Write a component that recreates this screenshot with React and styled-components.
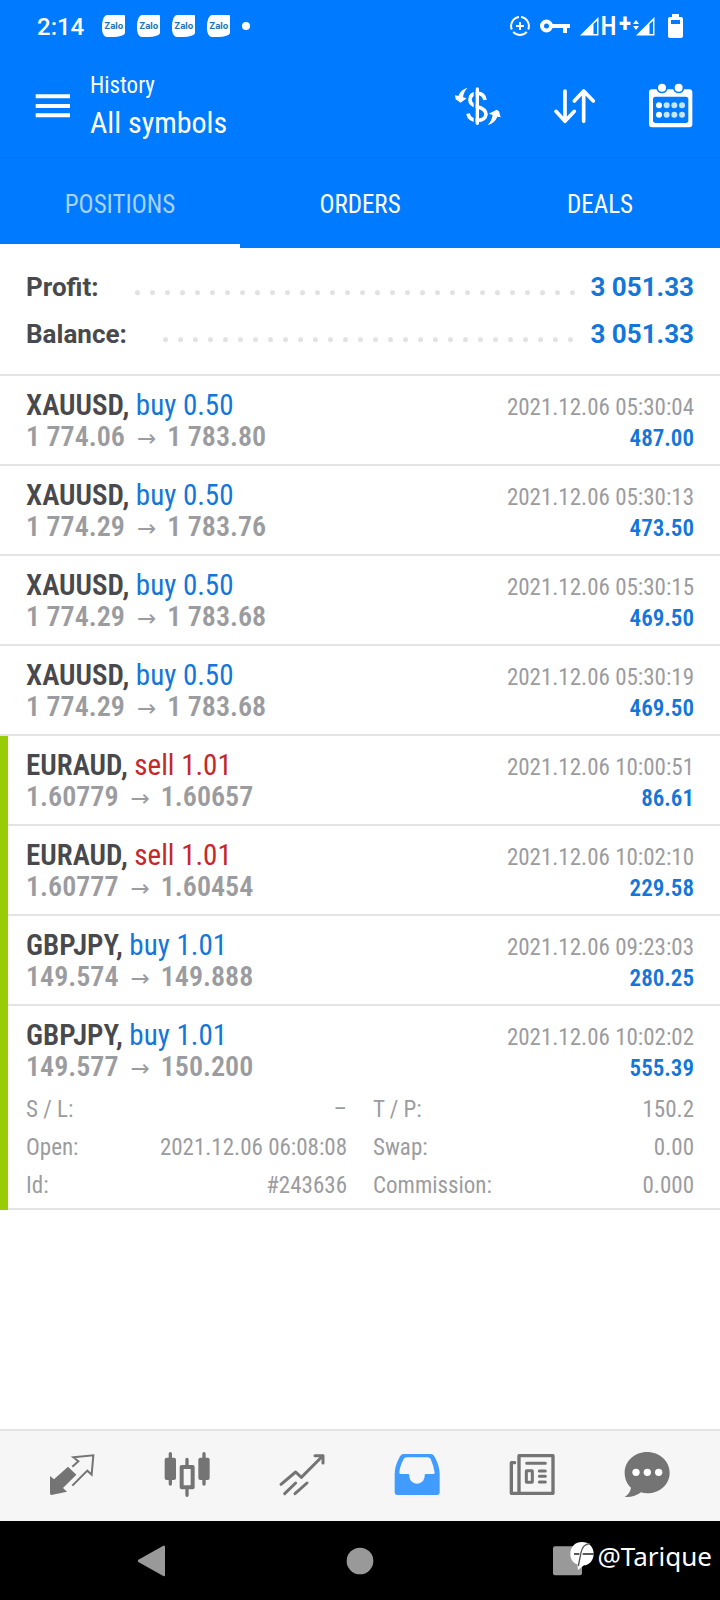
import React from "react";
import styled, { createGlobalStyle } from "styled-components";

const color = {
  brand: "#007aff",
  brandLine: "#0670e8",
  ink: "#48494d",
  muted: "#9b9ca0",
  buy: "#1276da",
  sell: "#c4282a",
  line: "#e4e4e6",
  mark: "#99cc05",
  icon: "#747474",
  active: "#429bff",
  bar: "#f6f6f6",
};

const condensed = `"Roboto Condensed", Roboto, sans-serif`;

const GlobalStyle = createGlobalStyle`
  *, *::before, *::after { box-sizing: border-box; }
  body { margin: 0; background: #fff; font-family: ${condensed}; }
  button { margin: 0; padding: 0; border: 0; background: none; color: inherit; font: inherit; }
  h1, p, ul, dl, dd { margin: 0; padding: 0; }
  ul { list-style: none; }
  svg { display: block; }
`;

const Screen = styled.div`
  min-height: 100vh;
  display: flex;
  flex-direction: column;
  background: #fff;
`;

const Header = styled.header`
  background: ${color.brand};
  color: #fff;
`;

const StatusBar = styled.div`
  height: 52px;
  padding: 0 37px;
  display: flex;
  align-items: center;
  justify-content: space-between;
`;

const StatusGroup = styled.div`
  display: flex;
  align-items: center;
  gap: ${(p) => p.$gap}px;
`;

const Clock = styled.time`
  margin-right: 6px;
  padding-top: 2px;
  font: 500 24px/28px Roboto, sans-serif;
`;

const ZaloBadge = styled.span`
  width: 23px;
  height: 22px;
  border-radius: 5px 1px 12px 5px / 11px 1px 4px 8px;
  background: #fff;
  color: #2274b8;
  font: 700 9px/22px Inter, sans-serif;
  text-align: center;
`;

const Dot = styled.span`
  width: 8px;
  height: 8px;
  border-radius: 50%;
  background: #fff;
`;

const Network = styled.span`
  display: flex;
  align-items: center;
  gap: 2px;
  padding-right: 3px;
  font: 500 26px/28px ${condensed};
`;

const Plus = styled.sup`
  font: 700 26px/22px ${condensed};
  align-self: flex-start;
`;

const Toolbar = styled.div`
  min-height: 106px;
  padding: 2px 26px 0 29px;
  display: flex;
  align-items: center;
  border-bottom: 1px solid ${color.brandLine};
`;

const IconButton = styled.button`
  width: 48px;
  height: 48px;
  flex: none;
`;

const Titles = styled.div`
  flex: 1;
  padding: 4px 0 0 13px;
`;

const Overline = styled.p`
  font-size: 23px;
  line-height: 30px;
`;

const Title = styled.h1`
  font-size: 30px;
  font-weight: 400;
  line-height: 44px;
`;

const Actions = styled.div`
  display: flex;
  gap: 48px;
`;

const Tabs = styled.div`
  display: grid;
  grid-template-columns: repeat(3, 1fr);
`;

const Tab = styled.button`
  && {
    height: 90px;
    padding-top: 6px;
    border-bottom: 4px solid ${(p) => (p.$selected ? "#fff" : "transparent")};
    color: ${(p) => (p.$selected ? "#a8d2ff" : "#fff")};
    font-size: 25px;
  }
`;

const Summary = styled.dl`
  && { padding: 16px 26px; }
  border-bottom: 2px solid ${color.line};
`;

const SummaryRow = styled.div`
  display: flex;
  font: 700 26px/47px Roboto, sans-serif;
  color: ${color.ink};
`;

const SummaryValue = styled.dd`
  color: ${color.buy};
`;

const Leader = styled.span`
  flex: 1;
  margin: 0 10px 0 31px;
  background: radial-gradient(circle at 50% 61%, #e2e2e4 2px, transparent 3px) 0 0 / 15px 100% repeat-x;
`;

const Main = styled.main`
  flex: 1;
`;

const Deals = styled.ul`
  && { padding-left: 0; }
  border-left: ${(p) => (p.$marked ? `8px solid ${color.mark}` : "0")};
`;

const Deal = styled.li`
  padding: 13px 26px ${(p) => (p.$open ? 3 : 11)}px ${(p) => (p.$marked ? 18 : 26)}px;
  border-bottom: 2px solid ${color.line};
`;

const Line = styled.div`
  height: 32px;
  display: flex;
  align-items: baseline;
  justify-content: space-between;
  font-size: 29px;
  line-height: 32px;
  white-space: nowrap;
`;

const Symbol = styled.strong`
  color: ${color.ink};
  font-weight: 600;
`;

const Side = styled.span`
  color: ${(p) => (p.$side === "sell" ? color.sell : color.buy)};
`;

const Time = styled.time`
  color: ${color.muted};
  font-size: 23px;
  line-height: 28px;
`;

const Prices = styled.span`
  color: ${color.muted};
  font-size: 28px;
  font-weight: 600;
`;

const Arrow = styled.span`
  margin: 0 11px 0 12px;
  font: 400 23px/20px "DejaVu Sans", sans-serif;
`;

const Profit = styled.strong`
  color: ${color.buy};
  font-size: 23px;
  font-weight: 600;
  line-height: 28px;
`;

const Details = styled.dl`
  && { margin-top: 8px; }
  display: grid;
  grid-template-columns: 1fr 1fr;
  column-gap: 26px;
  color: ${color.muted};
  font-size: 23px;
  line-height: 38px;
`;

const Detail = styled.div`
  display: flex;
  justify-content: space-between;
`;

const BottomNav = styled.nav`
  height: 92px;
  padding: 0 16px 0 14px;
  display: grid;
  grid-template-columns: repeat(6, 1fr);
  align-items: center;
  justify-items: center;
  border-top: 2px solid ${color.line};
  background: ${color.bar};
  color: ${color.icon};
`;

const NavButton = styled(IconButton)`
  && { color: ${(p) => (p.$active ? color.active : "inherit")}; }
`;

const SystemNav = styled.div`
  position: relative;
  height: 79px;
  padding: 0 48px;
  display: grid;
  grid-template-columns: repeat(3, 1fr);
  align-items: center;
  justify-items: center;
  background: #000;
  color: #999;
`;

const Watermark = styled.div`
  position: absolute;
  top: 17px;
  right: 8px;
  display: flex;
  align-items: center;
  gap: 3px;
  color: #fff;
  font: 400 26px/36px "Noto Sans", sans-serif;
`;

const Icon = ({ children, size = 48, ...rest }) => (
  <svg width={size} height={size} viewBox="0 0 144 144" fill="none" stroke="currentColor" strokeLinecap="round" strokeLinejoin="round" aria-hidden="true" {...rest}>
    {children}
  </svg>
);

const MenuIcon = () => (
  <Icon strokeWidth="12" strokeLinecap="butt">
    <path d="M20 43H123M20 72H123M20 100H123" />
  </Icon>
);

const CurrencyIcon = () => (
  <Icon strokeWidth="11" strokeLinecap="butt">
    <path d="M93 54Q90 34 70 34Q48 34 48 54Q48 68 70 74Q96 81 96 97Q94 115 70 115Q46 115 42 95" />
    <path d="M62 20V126" stroke={color.brand} strokeWidth="6" />
    <path d="M70 21V124" strokeLinecap="round" strokeWidth="10" />
    <path d="M41 17Q20 22 13 42L3 40L5 52L20 62L38 49L27 46Q29 28 41 17Z" fill="currentColor" stroke="none" />
    <path d="M101 129Q122 124 130 104L140 106L135 88L128 83L104 95L116 99Q113 117 101 129Z" fill="currentColor" stroke="none" />
  </Icon>
);

const SortIcon = () => (
  <Icon strokeWidth="11">
    <path d="M45 27V118M18 88L45 118L73 88M101 118V27M73 57L101 27L130 57" />
  </Icon>
);

const CalendarIcon = () => (
  <Icon stroke="none" fill="currentColor">
    <rect x="9" y="22" width="130" height="114" rx="9" />
    <rect x="21" y="44" width="106" height="79" rx="8" fill={color.brand} />
    {[48, 98].map((x) => (
      <g key={x}>
        <circle cx={x} cy="17" r="17" fill={color.brand} />
        <circle cx={x} cy="17" r="12" />
      </g>
    ))}
    {[39, 62, 85, 108].map((x) => (
      <g key={x} fill={x === 39 ? "#fff" : "#c4e4ff"}>
        <circle cx={x} cy="70" r="9" />
        <circle cx={x} cy="98" r="9" />
      </g>
    ))}
  </Icon>
);

const QuotesIcon = () => (
  <Icon strokeWidth="6" strokeLinecap="butt" strokeLinejoin="miter">
    <path d="M6 72L18 82L60 44L85 68L45 108L57 119L10 129Q6 129 6 124Z" fill="currentColor" stroke="none" />
    <path d="M73 44L91 28L76 16L136 10L131 68L118 56L73 101" />
  </Icon>
);

const ChartIcon = () => (
  <Icon strokeWidth="10">
    <path d="M22 5V96M123 5V96M72 22V39M72 112V130" />
    <rect x="5" y="17" width="34" height="67" rx="6" fill="currentColor" stroke="none" />
    <rect x="106" y="17" width="34" height="67" rx="6" fill="currentColor" stroke="none" />
    <rect x="56" y="45" width="33" height="61" strokeWidth="12" />
  </Icon>
);

const TradeIcon = () => (
  <Icon strokeWidth="9">
    <path d="M9 97L53 60L70 76L134 12" />
    <path d="M111 11H135V33" />
    <path d="M20 125L53 93M51 125L87 93" />
  </Icon>
);

const HistoryIcon = () => (
  <Icon stroke="none" fill="currentColor">
    <path fillRule="evenodd" d="M32 6H113Q120 6 124 13Q140 42 140 66V121Q140 129 132 129H13Q5 129 5 121V66Q5 42 21 13Q25 6 32 6ZM41 16Q35 16 32 21Q20 44 19 62Q19 66 23 66H45Q49 66 49 70C49 86 59 95 72 95C85 95 95 86 95 70Q95 66 99 66H121Q125 66 125 62Q123 44 113 21Q110 16 104 16Z" />
  </Icon>
);

const NewsIcon = () => (
  <Icon strokeWidth="10">
    <rect x="33" y="11" width="102" height="113" />
    <path d="M20 32H10V124H33" />
    <path d="M56 34H112M94 57H112M94 73H112M94 90H112" strokeWidth="9" />
    <rect x="55" y="56" width="18" height="35" rx="1" strokeWidth="9" />
  </Icon>
);

const ChatIcon = () => (
  <Icon stroke="none" fill="currentColor">
    <path d="M72 0C110 0 140 27 140 62C140 97 110 124 72 124Q62 124 54 121Q34 137 5 135Q21 125 24 107C12 96 5 80 5 62C5 27 35 0 72 0Z" />
    <g fill="#fff">
      <circle cx="39" cy="61" r="11" />
      <circle cx="73" cy="61" r="11" />
      <circle cx="107" cy="61" r="11" />
    </g>
  </Icon>
);

const Signal = () => (
  <svg width="19" height="19" viewBox="0 0 19 19" aria-hidden="true">
    <path d="M0 18.500L18.500 0V18.500Z" fill="#fff" />
    <path d="M13.500 7L17 4V17H13.500Z" fill={color.brand} />
  </svg>
);

const DataSignal = () => (
  <svg width="22" height="19" viewBox="0 0 22 19" aria-hidden="true">
    <path d="M3 18.500L21.500 0V18.500Z" fill="#fff" />
    <path d="M16.500 7L20 4V17H16.500Z" fill={color.brand} />
    <path d="M0 7L3 3L6 7ZM0 9L3 13L6 9Z" fill="#fff" />
  </svg>
);

const StatusIcons = () => (
  <StatusGroup $gap={10}>
    <svg width="20" height="20" viewBox="0 0 20 20" fill="none" stroke="#fff" strokeWidth="2" aria-hidden="true">
      <path d="M11 1.100A9 9 0 0 1 18.200 13.500M16.800 15.800A9 9 0 0 1 3.200 15.800M1.800 13.500A9 9 0 0 1 9 1.100M10 6V14M6 10H14" />
    </svg>
    <svg width="30" height="15" viewBox="0 0 30 15" fill="none" stroke="#fff" strokeWidth="4" aria-hidden="true">
      <circle cx="6.500" cy="7" r="4.500" />
      <path d="M11 7H30M25 7V14" />
    </svg>
    <Network>
      <Signal />
      <span>H</span>
      <Plus>+</Plus>
      <DataSignal />
    </Network>
    <svg width="15" height="24" viewBox="0 0 15 24" aria-hidden="true">
      <path d="M4 0H11V3H13Q15 3 15 5V22Q15 24 13 24H2Q0 24 0 22V5Q0 3 2 3H4Z" fill="#fff" />
      <path d="M3 6H12V10H3Z" fill={color.brand} />
    </svg>
  </StatusGroup>
);

const summary = [
  ["Profit:", "3 051.33"],
  ["Balance:", "3 051.33"],
];

const goldDeals = [
  { symbol: "XAUUSD", side: "buy", lots: "0.50", from: "1 774.06", to: "1 783.80", time: "2021.12.06 05:30:04", profit: "487.00" },
  { symbol: "XAUUSD", side: "buy", lots: "0.50", from: "1 774.29", to: "1 783.76", time: "2021.12.06 05:30:13", profit: "473.50" },
  { symbol: "XAUUSD", side: "buy", lots: "0.50", from: "1 774.29", to: "1 783.68", time: "2021.12.06 05:30:15", profit: "469.50" },
  { symbol: "XAUUSD", side: "buy", lots: "0.50", from: "1 774.29", to: "1 783.68", time: "2021.12.06 05:30:19", profit: "469.50" },
];

const markedDeals = [
  { symbol: "EURAUD", side: "sell", lots: "1.01", from: "1.60779", to: "1.60657", time: "2021.12.06 10:00:51", profit: "86.61" },
  { symbol: "EURAUD", side: "sell", lots: "1.01", from: "1.60777", to: "1.60454", time: "2021.12.06 10:02:10", profit: "229.58" },
  { symbol: "GBPJPY", side: "buy", lots: "1.01", from: "149.574", to: "149.888", time: "2021.12.06 09:23:03", profit: "280.25" },
  {
    symbol: "GBPJPY", side: "buy", lots: "1.01", from: "149.577", to: "150.200", time: "2021.12.06 10:02:02", profit: "555.39",
    details: [
      ["S / L:", "–"],
      ["T / P:", "150.2"],
      ["Open:", "2021.12.06 06:08:08"],
      ["Swap:", "0.00"],
      ["Id:", "#243636"],
      ["Commission:", "0.000"],
    ],
  },
];

const navItems = [
  ["Quotes", QuotesIcon],
  ["Charts", ChartIcon],
  ["Trade", TradeIcon],
  ["History", HistoryIcon],
  ["News", NewsIcon],
  ["Messages", ChatIcon],
];

const DealList = ({ deals, marked }) => (
  <Deals $marked={marked}>
    {deals.map((d, i) => (
      <Deal key={i} $marked={marked} $open={Boolean(d.details)}>
        <Line>
          <span>
            <Symbol>{d.symbol},</Symbol> <Side $side={d.side}>{d.side} {d.lots}</Side>
          </span>
          <Time>{d.time}</Time>
        </Line>
        <Line>
          <Prices>{d.from}<Arrow>→</Arrow>{d.to}</Prices>
          <Profit>{d.profit}</Profit>
        </Line>
        {d.details && (
          <Details>
            {d.details.map(([label, value]) => (
              <Detail key={label}>
                <dt>{label}</dt>
                <dd>{value}</dd>
              </Detail>
            ))}
          </Details>
        )}
      </Deal>
    ))}
  </Deals>
);

export default function App() {
  return (
    <Screen>
      <GlobalStyle />
      <Header>
        <StatusBar>
          <StatusGroup $gap={12}>
            <Clock>2:14</Clock>
            {[0, 1, 2, 3].map((n) => <ZaloBadge key={n}>Zalo</ZaloBadge>)}
            <Dot />
          </StatusGroup>
          <StatusIcons />
        </StatusBar>
        <Toolbar>
          <IconButton aria-label="Menu"><MenuIcon /></IconButton>
          <Titles>
            <Overline>History</Overline>
            <Title>All symbols</Title>
          </Titles>
          <Actions>
            <IconButton aria-label="Currency"><CurrencyIcon /></IconButton>
            <IconButton aria-label="Sort"><SortIcon /></IconButton>
            <IconButton aria-label="Period"><CalendarIcon /></IconButton>
          </Actions>
        </Toolbar>
        <Tabs role="tablist">
          <Tab role="tab" aria-selected="true" $selected>POSITIONS</Tab>
          <Tab role="tab" aria-selected="false">ORDERS</Tab>
          <Tab role="tab" aria-selected="false">DEALS</Tab>
        </Tabs>
      </Header>
      <Main>
        <Summary>
          {summary.map(([label, value]) => (
            <SummaryRow key={label}>
              <dt>{label}</dt>
              <Leader />
              <SummaryValue>{value}</SummaryValue>
            </SummaryRow>
          ))}
        </Summary>
        <DealList deals={goldDeals} />
        <DealList deals={markedDeals} marked />
      </Main>
      <BottomNav aria-label="Sections">
        {navItems.map(([label, Glyph]) => (
          <NavButton key={label} aria-label={label} $active={label === "History"}><Glyph /></NavButton>
        ))}
      </BottomNav>
      <SystemNav>
        <IconButton aria-label="Back">
          <Icon stroke="none" fill="currentColor"><path d="M31 68L106 26Q111 24 111 30V114Q111 120 106 117L31 75Q27 72 31 68Z" /></Icon>
        </IconButton>
        <IconButton aria-label="Home">
          <Icon stroke="none" fill="currentColor"><circle cx="72" cy="72" r="40" /></Icon>
        </IconButton>
        <IconButton aria-label="Recent apps">
          <Icon stroke="none" fill="currentColor"><rect x="27" y="28" width="87" height="87" rx="6" /></Icon>
        </IconButton>
        <Watermark>
          <svg width="24" height="28" viewBox="0 0 72 84" aria-hidden="true">
            <path d="M36 0C56 0 71 14 71 35C71 56 56 70 42 70L24 84L22 67C8 62 1 50 1 35C1 14 16 0 36 0Z" fill="#fff" />
            <path d="M60 5Q38 6 33 32L25 72" fill="none" stroke="#555" strokeWidth="4" />
            <path d="M12 36H28M38 36H71" fill="none" stroke="#222" strokeWidth="4" />
          </svg>
          <span>@Tarique</span>
        </Watermark>
      </SystemNav>
    </Screen>
  );
}
